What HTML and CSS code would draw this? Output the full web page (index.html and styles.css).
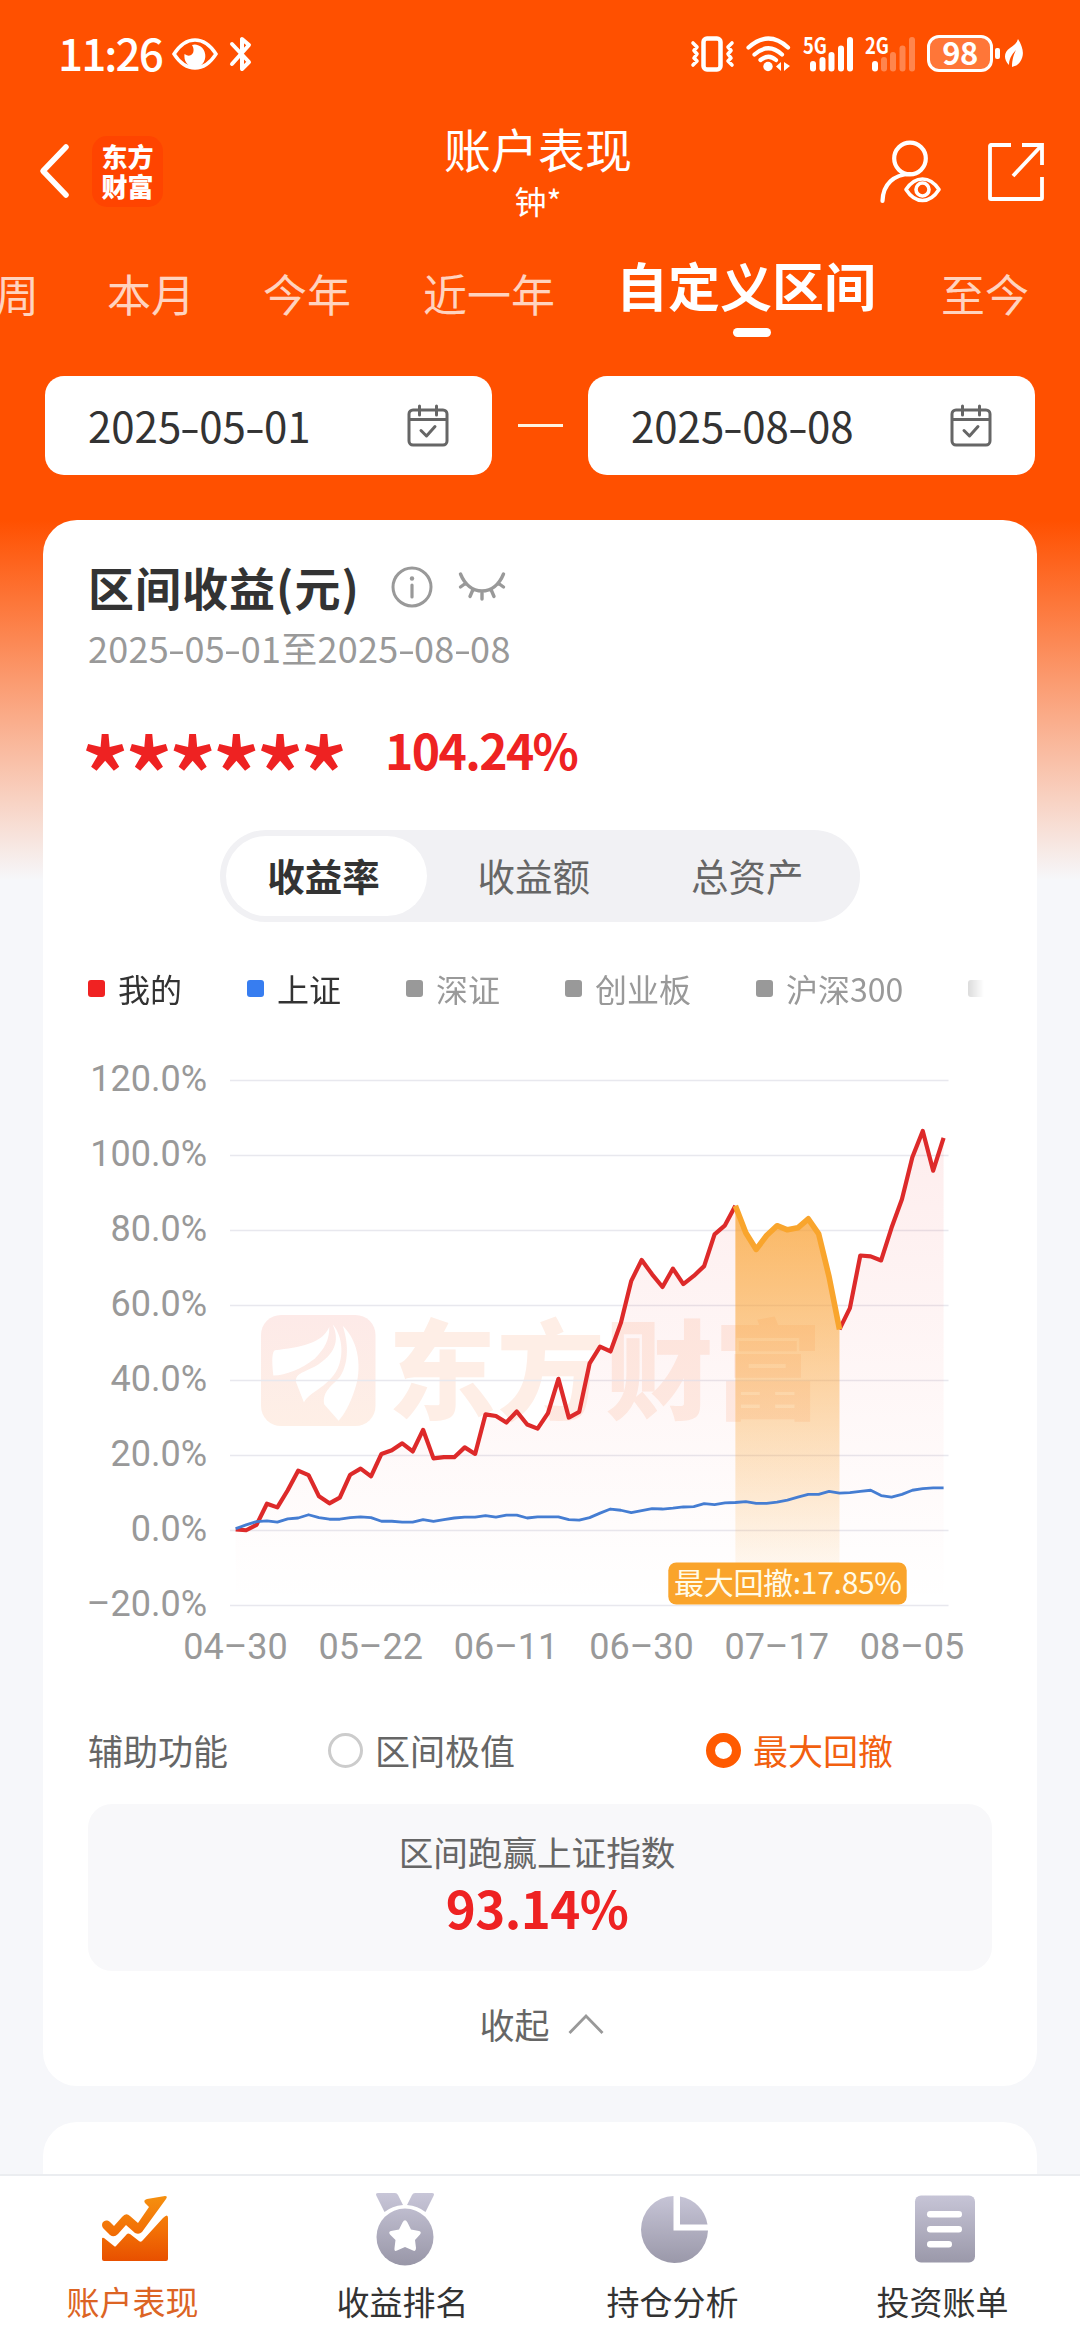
FILE: index.html
```html
<!DOCTYPE html>
<html lang="zh-CN">
<head>
<meta charset="utf-8">
<title>账户表现</title>
<link rel="stylesheet" href="styles.css">
</head>
<body>
<div class="page">
  <div class="status">
    <span class="clock">11:26</span>
    <svg class="st-eye" width="46" height="32" viewBox="0 0 46 32"><path d="M2 16Q11 2 23 2T44 16Q35 30 23 30T2 16Z" fill="none" stroke="#fff" stroke-width="3.4"/><path d="M20 7A10.500 11.500 0 1 1 12.500 16Q18 20 21 15Q22.500 11 20 7Z" fill="#fff"/></svg>
    <svg class="st-bt" width="22" height="36" viewBox="0 0 22 36"><path d="M2 8L19 26L12 33V22M2 28L19 9L12 3V15" fill="none" stroke="#fff" stroke-width="4" stroke-linejoin="round" stroke-linecap="round"/></svg>
    <span class="spring"></span>
    <svg class="st-vib" width="43" height="36" viewBox="0 0 43 36"><rect x="12.500" y="2.500" width="17" height="31" rx="3.500" fill="none" stroke="#fff" stroke-width="4.500"/><path d="M2 7L6 11L3 14.500L6 18L3 22L6 25L2 29M41 7L37 11L40 14.500L37 18L40 22L37 25L41 29" fill="none" stroke="#fff" stroke-width="3.600" stroke-linejoin="round" stroke-linecap="round"/></svg>
    <svg class="st-wifi" width="45" height="36" viewBox="0 0 45 36"><g fill="none" stroke="#fff" stroke-width="4.200" stroke-linecap="round"><path d="M2.500 11.500Q22.500 -6.500 42 11.500"/><path d="M8.500 18.500Q22.500 6 36 18.500"/><path d="M14.500 24Q22.500 17.500 30 24"/></g><circle cx="22" cy="30.500" r="4.700" fill="#fff"/><path d="M35 26V35L30 30.500ZM38 26L44 30L38 35Z" fill="#fff"/></svg>
    <svg class="st-sig" width="50" height="36" viewBox="0 0 50 36"><text x="0" y="18" class="net" textLength="24" lengthAdjust="spacingAndGlyphs">5G</text><g fill="#fff"><rect x="7" y="25" width="6" height="10.500" rx="3"/><rect x="16.500" y="21" width="6" height="14.500" rx="3"/><rect x="25.500" y="16" width="6" height="19.500" rx="3"/><rect x="35" y="9.500" width="6" height="26" rx="3"/><rect x="44" y="1" width="6" height="34.500" rx="3"/></g></svg>
    <svg class="st-sig" width="50" height="36" viewBox="0 0 50 36"><text x="0" y="18" class="net" textLength="24" lengthAdjust="spacingAndGlyphs">2G</text><g fill="#fff"><rect x="7" y="25" width="6" height="10.500" rx="3"/><g opacity=".3"><rect x="16" y="21" width="6" height="14.500" rx="3"/><rect x="25" y="16" width="6" height="19.500" rx="3"/><rect x="34.500" y="9.500" width="6" height="26" rx="3"/><rect x="44" y="1" width="6" height="34.500" rx="3"/></g></g></svg>
    <div class="battery">98</div>
    <i class="bat-cap"></i>
    <svg class="st-leaf" width="18" height="29" viewBox="0 0 18 29"><path d="M13 0C18 8 20 16 15 23C12 27 9 27 7 28C7 20 9 15 11 11C6 16 4 21 4 26C-2 20 -1 13 5 9C9 6 12 4 13 0Z" fill="#fff"/></svg>
  </div>

  <header class="header">
    <div class="head-left">
      <svg width="30" height="54" viewBox="0 0 30 54"><path d="M27 3L4 27L27 51" fill="none" stroke="#fff" stroke-width="5.500" stroke-linecap="round" stroke-linejoin="round"/></svg>
      <div class="brand"><span>东方</span><span>财富</span></div>
    </div>
    <div class="head-title"><h1>账户表现</h1><p>钟*</p></div>
    <div class="head-right">
      <svg width="62" height="64" viewBox="0 0 62 64"><g fill="none" stroke="#fff" stroke-width="4.200"><circle cx="31" cy="18.500" r="15.800"/><path d="M3.500 61C4 44 15 34.500 31 34" stroke-linecap="round"/><path d="M27 49.500Q34 39 43.500 39T60 49.500Q53 60.500 43.500 60.500T27 49.500Z" stroke-width="3.600" stroke-linejoin="round"/><circle cx="43.500" cy="49.500" r="6.500" stroke-width="3.600"/></g></svg>
      <svg width="58" height="60" viewBox="0 0 58 60"><path d="M24 3H4Q3 3 3 4V56Q3 57 4 57H54Q55 57 55 56V35M35 3H55V23M55 3L26 34" fill="none" stroke="#fff" stroke-width="3.800"/></svg>
    </div>
  </header>

  <nav class="tabs">
    <span class="tab">本周</span><span class="tab">本月</span><span class="tab">今年</span><span class="tab year">近一年</span><span class="tab on">自定义区间<i></i></span><span class="tab">至今</span>
  </nav>

  <div class="dates">
    <div class="date"><span>2025<b>-</b>05<b>-</b>01</span><svg width="42" height="42" viewBox="0 0 42 42"><g fill="none" stroke="#666" stroke-width="3"><rect x="2" y="5" width="38" height="35" rx="4"/><path d="M2 14.500H40"/><path d="M12.500 1V10M29.500 1V10M14 25.500L19.500 31L28 21.500" stroke-linecap="round" stroke-linejoin="round"/></g></svg></div>
    <i class="dash"></i>
    <div class="date"><span>2025<b>-</b>08<b>-</b>08</span><svg width="42" height="42" viewBox="0 0 42 42"><g fill="none" stroke="#666" stroke-width="3"><rect x="2" y="5" width="38" height="35" rx="4"/><path d="M2 14.500H40"/><path d="M12.500 1V10M29.500 1V10M14 25.500L19.500 31L28 21.500" stroke-linecap="round" stroke-linejoin="round"/></g></svg></div>
  </div>

  <main class="card">
    <div class="card-title">
      <h2>区间收益(元)</h2>
      <svg class="info" width="42" height="42" viewBox="0 0 42 42"><circle cx="21" cy="21" r="19" fill="none" stroke="#999" stroke-width="3"/><circle cx="21" cy="12.500" r="2.200" fill="#999"/><path d="M21 19V31" stroke="#999" stroke-width="3.200" stroke-linecap="round"/></svg>
      <svg class="shut" width="48" height="30" viewBox="0 0 48 30"><path d="M2.500 3C7 14 15 20 24 20S41 14 45.500 3M8 12L2.500 16M40 12L45.500 16M15 18.500L12 25.500M33 18.500L36 25.500M24 20V28" fill="none" stroke="#999" stroke-width="3.400" stroke-linecap="round"/></svg>
    </div>
    <p class="range">2025<b>-</b>05<b>-</b>01至2025<b>-</b>08<b>-</b>08</p>
    <div class="values"><span class="stars">******</span><span class="rate">104.24%</span></div>

    <div class="segment"><span class="seg on">收益率</span><span class="seg">收益额</span><span class="seg">总资产</span></div>

    <div class="legend">
      <span class="lg mine"><i></i>我的</span><span class="lg sse"><i></i>上证</span><span class="lg"><i></i>深证</span><span class="lg"><i></i>创业板</span><span class="lg"><i></i>沪深300</span><span class="lg"><i></i></span>
    </div>

    <svg class="chart" width="904" height="640" viewBox="88 1040 904 640">
      <defs>
        <linearGradient id="mark" x1="0" y1="0" x2="0" y2="1"><stop offset="0" stop-color="#fdeae8"/><stop offset="1" stop-color="#feefe6"/></linearGradient>
        <linearGradient id="redArea" x1="0" y1="0" x2="0" y2="1"><stop offset="0" stop-color="#f02020" stop-opacity=".08"/><stop offset="1" stop-color="#f02020" stop-opacity="0"/></linearGradient>
        <linearGradient id="dropArea" x1="0" y1="0" x2="0" y2="1"><stop offset="0" stop-color="#f9a02a" stop-opacity=".72"/><stop offset="1" stop-color="#f9a02a" stop-opacity="0"/></linearGradient>
      </defs>
      <rect x="261" y="1315" width="114.500" height="111" rx="20" fill="url(#mark)"/>
      <g transform="translate(60 1040) scale(.3333 .4082)" fill="#fff">
        <path d="M808 703C785 745 720 752 645 760Q632 765 640 822C680 820 720 808 765 780C795 755 808 735 808 703Z"/>
        <path d="M818 697C842 740 820 770 775 795C735 815 705 815 708 838L732 888C745 865 790 855 822 820C855 785 850 725 818 697Z"/>
        <path d="M848 700C900 740 905 810 885 855C870 895 850 920 836 933L793 893C785 860 820 845 840 825C868 790 865 740 848 700Z"/>
      </g>
      <text class="watermark" x="388" y="1411" textLength="434">东方财富</text>
      <path d="M230 1080.500H948.500M230 1155.500H948.500M230 1230.500H948.500M230 1305.500H948.500M230 1380.500H948.500M230 1455.500H948.500M230 1530.500H948.500M230 1605.500H948.500" stroke="#e8e8ee" stroke-width="1.300"/>
      <g class="axis-y">
        <text x="207" y="1091">120.0%</text><text x="207" y="1166">100.0%</text><text x="207" y="1241">80.0%</text><text x="207" y="1316">60.0%</text><text x="207" y="1391">40.0%</text><text x="207" y="1466">20.0%</text><text x="207" y="1541">0.0%</text><text x="207" y="1616">–20.0%</text>
      </g>
      <g class="axis-x">
        <text x="235.500" y="1659">04–30</text><text x="370.700" y="1659">05–22</text><text x="506" y="1659">06–11</text><text x="641.500" y="1659">06–30</text><text x="776.700" y="1659">07–17</text><text x="912" y="1659">08–05</text>
      </g>
      <!-- one horizontal unit per trading day -->
      <g class="series" transform="translate(235.700 1040) scale(10.410 .4082)">
        <path fill="url(#redArea)" d="M0 1199L1 1201L2 1188L3 1136L4 1145L5 1103L6 1055L7 1066L8 1118L9 1135L10 1121L11 1065L12 1050L13 1069L14 1014L15 1005L16 988L17 1008L18 955L19 1025L20 1022L21 1022L22 998L23 1014L24 917L25 921L26 937L27 910L28 942L29 952L30 914L31 830L32 925L33 911L34 792L35 751L36 763L37 693L38 590L39 539L40 574L41 605L42 560L43 598L44 578L45 554L46 476L47 454L48 406L49 472L50 513L51 479L52 455L53 465L54 460L55 438L56 475L57 580L58 709L59 657L60 528L61 530L62 540L63 460L64 390L65 287L66 223L67 320L68 240V1385H0Z"/>
        <path fill="url(#dropArea)" d="M48 406L49 472L50 513L51 479L52 455L53 465L54 460L55 438L56 475L57 580L58 709V1385H48Z"/>
        <polyline class="mine-line" points="0,1199 1,1201 2,1188 3,1136 4,1145 5,1103 6,1055 7,1066 8,1118 9,1135 10,1121 11,1065 12,1050 13,1069 14,1014 15,1005 16,988 17,1008 18,955 19,1025 20,1022 21,1022 22,998 23,1014 24,917 25,921 26,937 27,910 28,942 29,952 30,914 31,830 32,925 33,911 34,792 35,751 36,763 37,693 38,590 39,539 40,574 41,605 42,560 43,598 44,578 45,554 46,476 47,454 48,406"/>
        <polyline class="mine-line" points="58,709 59,657 60,528 61,530 62,540 63,460 64,390 65,287 66,223 67,320 68,240"/>
        <polyline class="drop-line" points="48,406 49,472 50,513 51,479 52,455 53,465 54,460 55,438 56,475 57,580 58,709"/>
        <polyline class="sse-line" points="0,1197 1,1188 2,1180 3,1178 4,1181 5,1173 6,1171 7,1163 8,1170 9,1174 10,1174 11,1170 12,1168 13,1170 14,1179 15,1179 16,1181 17,1181 18,1175 19,1179 20,1175 21,1171 22,1169 23,1169 24,1165 25,1169 26,1164 27,1164 28,1171 29,1168 30,1168 31,1168 32,1175 33,1176 34,1170 35,1159 36,1149 37,1152 38,1158 39,1153 40,1148 41,1149 42,1147 43,1144 44,1143 45,1136 46,1138 47,1134 48,1133 49,1131 50,1135 51,1135 52,1132 53,1127 54,1120 55,1113 56,1113 57,1106 58,1110 59,1109 60,1106 61,1103 62,1116 63,1120 64,1113 65,1103 66,1099 67,1097 68,1097"/>
      </g>
      <rect x="668.300" y="1562.500" width="238.400" height="42" rx="8" fill="#faa42b"/>
      <text class="drop-text" x="674" y="1594" textLength="228">最大回撤:17.85%</text>
    </svg>

    <div class="helpers">
      <span class="h-label">辅助功能</span>
      <span class="radio h-one"><i></i>区间极值</span>
      <span class="radio on"><i></i>最大回撤</span>
    </div>

    <div class="beat"><p>区间跑赢上证指数</p><strong>93.14%</strong></div>

    <div class="fold">收起<svg width="36" height="22" viewBox="0 0 36 22"><path d="M1.500 20L18 3L34.500 20" fill="none" stroke="#999" stroke-width="2.800"/></svg></div>
  </main>
  <section class="card next"></section>

  <footer class="nav">
    <div class="item on">
      <svg width="68" height="76" viewBox="0 0 68 76"><defs><linearGradient id="warm" gradientUnits="userSpaceOnUse" x1="0" y1="6" x2="0" y2="71"><stop offset="0" stop-color="#f5900f"/><stop offset=".5" stop-color="#f37206"/><stop offset="1" stop-color="#e85000"/></linearGradient></defs><path fill="url(#warm)" d="M2 38C-1 33 4 28 9 32L13 36L21 27Q25 22 29 26L37 33L48 17L44 13Q42 10 46 9L64 6Q67 6 65 9L41 42Q38 45 34 43L25 35L17 44Q13 48 9 45Z"/><path fill="url(#warm)" d="M1 49Q1 47 3 48L13 56Q14 57 15 56L26 44Q27 43 29 44L38 51Q40 53 42 50L62 28Q67 23 67 28V69Q67 71 65 71H3Q1 71 1 69Z"/></svg>
      <span>账户表现</span>
    </div>
    <div class="item">
      <svg width="60" height="76" viewBox="0 0 60 76"><defs><linearGradient id="cool" gradientUnits="userSpaceOnUse" x1="0" y1="3" x2="0" y2="75"><stop offset="0" stop-color="#c8c6d8"/><stop offset="1" stop-color="#9997a8"/></linearGradient></defs><g fill="url(#cool)"><path d="M1.500 6Q0 3 3 3H20Q22 3 23 5L28 15Q17 16 9.500 22Z"/><path d="M58.500 6Q60 3 57 3H40Q38 3 37 5L32 15Q43 16 50.500 22Z"/><circle cx="30" cy="47" r="28.500"/></g><path d="M27.500 32.500Q30 28 32.500 32.500L36 39.500L44 41Q47 42 45 44.500L40 50L41 58Q41 62 38 60.500L30 57L22 60.500Q19 62 19.500 58L20.500 50L15 44.500Q13 42 16 41L24 39.500Z" fill="#fff"/></svg>
      <span>收益排名</span>
    </div>
    <div class="item">
      <svg width="68" height="76" viewBox="0 0 68 76"><path fill="url(#cool)" d="M32.500 6V40.500H67A33.500 33.500 0 1 1 32.500 6Z"/><path fill="url(#cool)" d="M39 6.500A33.500 33.500 0 0 1 66.500 34.500H39Z"/></svg>
      <span>持仓分析</span>
    </div>
    <div class="item">
      <svg width="62" height="76" viewBox="0 0 62 76"><rect x="1" y="5.500" width="60" height="67" rx="6" fill="url(#cool)"/><g fill="#fff"><rect x="13" y="21" width="35" height="6.500" rx="3.200"/><rect x="13" y="36" width="35" height="6.500" rx="3.200"/><rect x="13" y="51" width="25" height="6.500" rx="3.200"/></g></svg>
      <span>投资账单</span>
    </div>
  </footer>
</div>
</body>
</html>
```
FILE: styles.css
```css
* { box-sizing: border-box; margin: 0; padding: 0; }
body { width: 1080px; font-family: "Noto Sans CJK SC", "Noto Sans", sans-serif; color: #333; }
i { font-style: normal; display: block; flex: none; }
svg { display: block; flex: none; overflow: visible; }
.page {
  width: 1080px; height: 2340px; overflow: hidden;
  display: flex; flex-direction: column;
  background: linear-gradient(#ff5000 0, #ff5000 520px, #f6f7fa 880px);
}

/* status bar */
.status { height: 107px; flex: none; display: flex; align-items: center; padding: 0 57px 0 58px; color: #fff; }
.clock { font-size: 44px; font-weight: 500; line-height: 60px; width: 114px; letter-spacing: -1.9px; margin-top: -4px; }
.st-bt { margin-left: 12px; }
.spring { flex: 1; }
.st-wifi { margin-left: 12px; }
.st-sig { margin-left: 12px; }
.net { font: 700 22px "Noto Sans CJK SC", sans-serif; fill: #fff; }
.battery {
  margin-left: 12px; width: 66px; height: 37px; border: 3px solid #fff; border-radius: 12px;
  background: rgba(255, 255, 255, .22); font-size: 31px; font-weight: 700; line-height: 27px; text-align: center; letter-spacing: -.5px;
}
.bat-cap { width: 5px; height: 11px; border-radius: 2px; background: #fff; margin: 0 5px 0 2px; }

/* header */
.header { height: 128px; flex: none; display: grid; grid-template-columns: 1fr auto 1fr; color: #fff; }
.head-left { display: flex; align-items: center; padding-left: 39px; gap: 23px; }
.brand {
  width: 71px; height: 71px; border-radius: 15px; background: #ff4400;
  display: flex; flex-direction: column; align-items: center; justify-content: center;
  font-size: 26px; line-height: 30px; font-weight: 900; padding-bottom: 1px;
}
.head-title { text-align: center; padding: 13px 4px 0 0; }
.head-title h1 { font-size: 47px; line-height: 56px; font-weight: 400; }
.head-title p { font-size: 32px; line-height: 32px; margin-top: 8px; }
.head-right { display: flex; align-items: center; justify-content: flex-end; gap: 46px; padding: 1px 35px 0 0; }

/* period tabs */
.tabs { height: 141px; flex: none; display: flex; align-items: flex-start; gap: 68px; padding-top: 20px; margin-left: -49px; white-space: nowrap; }
.tab { font-size: 44px; line-height: 60px; margin-top: 8px; color: rgba(255, 255, 255, .75); }
.tab.year { margin-left: 4px; }
.tab.on { font-size: 52px; font-weight: 700; margin: 0 -3px 0 -7px; color: #fff; }
.tab.on i { width: 38px; height: 9px; border-radius: 5px; background: #fff; margin: 13px 0 0 117px; }

/* date pickers */
.dates { height: 99px; flex: none; padding: 0 45px; display: flex; align-items: center; margin-bottom: 45px; }
.date {
  flex: 1; height: 99px; border-radius: 19px; background: #fff; padding: 0 43px;
  display: flex; align-items: center; justify-content: space-between; font-size: 42px; line-height: 60px;
}
.date span { margin-top: -1px; }
.date b, .range b { display: inline-block; font-weight: 400; transform: scaleX(1.4); width: .43em; text-align: center; }
.dash { width: 45px; height: 3px; background: #fff3e0; margin: 0 25px 0 26px; }

/* main card */
.card { flex: none; margin: 0 43px; padding: 36px 45px 0; background: #fff; border-radius: 34px; height: 1566px; }
.card-title { height: 60px; display: flex; align-items: center; }
.card-title h2 { font-size: 46px; line-height: 60px; font-weight: 700; letter-spacing: 1px; }
.info { margin-left: 31px; margin-top: 2px; }
.shut { margin-left: 25px; }
.range { font-size: 36px; line-height: 40px; margin-top: 11px; color: #999; letter-spacing: .3px; }
.values { height: 60px; margin-top: 51px; display: flex; align-items: center; color: #ee2222; }
.stars { width: 305px; margin-left: -8px; font-size: 104px; line-height: 60px; height: 60px; font-weight: 500; letter-spacing: -6.6px; padding-top: 24px; white-space: nowrap; }
.rate { font-size: 48px; line-height: 60px; font-weight: 700; letter-spacing: -1.6px; padding-top: 1px; }
.segment { width: 640px; height: 92px; margin: 52px auto 0; padding: 6px; border-radius: 46px; background: #f1f1f4; display: flex; gap: 6px; }
.seg { flex: 1; padding-right: 6px; text-align: center; font-size: 37.5px; line-height: 78px; color: #666; }
.seg.on { flex: none; width: 201px; height: 80px; border-radius: 40px; background: #fff; color: #333; font-weight: 700; }

.legend {
  width: 896px; height: 34px; margin-top: 49px; display: flex; align-items: center; gap: 65px; overflow: hidden;
  font-size: 32px; line-height: 34px; color: #999; white-space: nowrap;
  -webkit-mask-image: linear-gradient(90deg, #000 850px, transparent 896px);
  mask-image: linear-gradient(90deg, #000 850px, transparent 896px);
}
.lg { display: flex; align-items: center; gap: 13px; flex: none; }
.lg i { width: 17px; height: 17px; border-radius: 3px; background: #999; }
.mine, .sse { color: #333; }
.mine i { background: #f02222; }
.sse i { background: #377df0; }

/* chart */
.chart { margin-top: 35px; }
.watermark { font-size: 108px; font-weight: 900; fill: #feeee6; }
.axis-y text, .axis-x text { font-family: Roboto, "Noto Sans", sans-serif; font-size: 36px; fill: #999; }
.axis-y text { text-anchor: end; }
.axis-x text { text-anchor: middle; }
.series polyline { fill: none; stroke-linejoin: round; vector-effect: non-scaling-stroke; }
.mine-line { stroke: #dd2a2a; stroke-width: 4.2px; }
.drop-line { stroke: #f9a52d; stroke-width: 5.6px; }
.sse-line { stroke: #457dd2; stroke-width: 2.8px; }
.drop-text { font-size: 30px; fill: #fffbe8; }

.helpers { height: 40px; margin-top: 50px; display: flex; align-items: center; font-size: 35px; line-height: 40px; color: #666; }
.h-label { width: 240px; }
.radio { display: flex; align-items: center; gap: 12px; }
.radio i { width: 35px; height: 35px; border-radius: 50%; border: 3px solid #ccc; }
.h-one { width: 378px; }
.radio.on { color: #f2600f; }
.radio.on i { border: 9px solid #ff5a00; }

.beat { height: 167px; margin-top: 34px; border-radius: 24px; background: #f8f8fa; text-align: center; padding: 23px 6px 0 0; }
.beat p { font-size: 34.600px; line-height: 48px; color: #666; }
.beat strong { display: block; font-size: 51px; line-height: 60px; color: #ee2222; letter-spacing: -.6px; margin-top: 2px; }
.fold { height: 48px; margin-top: 29px; display: flex; align-items: center; justify-content: center; gap: 18px; font-size: 35px; line-height: 48px; color: #666; padding-left: 3px; }
.next { margin-top: 36px; height: 52px; border-radius: 34px 34px 0 0; }

/* bottom navigation */
.nav { flex: none; height: 166px; border-top: 2px solid #ebedf0; background: #fff; display: grid; grid-template-columns: repeat(4, 1fr); }
.item { display: flex; flex-direction: column; align-items: center; padding-top: 14px; color: #333; }
.item span { font-size: 33px; line-height: 40px; padding-right: 5px; margin-top: 15px; }
.item.on span { color: #dc6424; }
```
